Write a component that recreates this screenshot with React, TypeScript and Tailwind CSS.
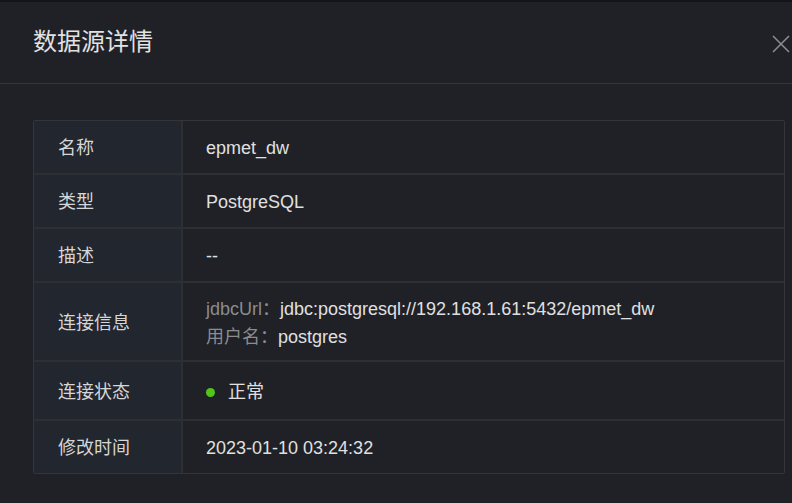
const rows: { label: string; height: string; content: React.ReactNode }[] = [
  { label: "名称", height: "h-[52px]", content: "epmet_dw" },
  { label: "类型", height: "h-[54px]", content: "PostgreSQL" },
  { label: "描述", height: "h-[54px]", content: "--" },
  {
    label: "连接信息",
    height: "h-[79px]",
    content: (
      <div className="flex flex-col leading-[28px]">
        <div>
          <span className="text-[#8b8c8f]">jdbcUrl：</span>
          jdbc:postgresql://192.168.1.61:5432/epmet_dw
        </div>
        <div>
          <span className="text-[#8b8c8f]">用户名：</span>
          postgres
        </div>
      </div>
    ),
  },
  {
    label: "连接状态",
    height: "h-[59px]",
    content: (
      <div className="flex items-center gap-[13px]">
        <span className="w-[9px] h-[9px] rounded-full bg-[#52c41a]" />
        <span>正常</span>
      </div>
    ),
  },
  { label: "修改时间", height: "h-[54px]", content: "2023-01-10 03:24:32" },
];

export default function App() {
  return (
    <div
      className="w-[792px] h-[503px] overflow-hidden bg-[#1f2126] text-[#dcdcdc] flex flex-col"
      style={{ fontFamily: '"Liberation Sans", "Noto Sans CJK SC", sans-serif' }}
    >
      <div className="h-[2px] bg-[#141519]" />
      <div className="h-[82px] flex items-center justify-between pl-[33px] pr-[2px] border-b border-[#34353a]">
        <h1 className="text-[24px] text-[#e2e2e2] leading-none pb-[2px]">数据源详情</h1>
        <svg width="18" height="18" viewBox="0 0 18 18" className="mt-[2px]">
          <path d="M1 1 L17 17 M17 1 L1 17" stroke="#8c8c8c" strokeWidth="1.6" />
        </svg>
      </div>
      <div className="pt-[36px] pl-[33px] pr-[7px]">
        <div className="border border-[#34353a] rounded-[2px] overflow-hidden text-[18px]">
          {rows.map((r, i) => (
            <div
              key={r.label}
              className={`flex ${r.height} ${i > 0 ? "border-t-2 border-[#2e2f33]" : ""}`}
            >
              <div className="w-[149px] shrink-0 bg-[#22262e] border-r-2 border-[#2e2f33] flex items-center pl-[24px] pt-[3px] text-[#d6d6d6]">
                {r.label}
              </div>
              <div className="flex-1 flex items-center pl-[23px] pt-[3px] text-[#e0e0e0]">{r.content}</div>
            </div>
          ))}
        </div>
      </div>
    </div>
  );
}
